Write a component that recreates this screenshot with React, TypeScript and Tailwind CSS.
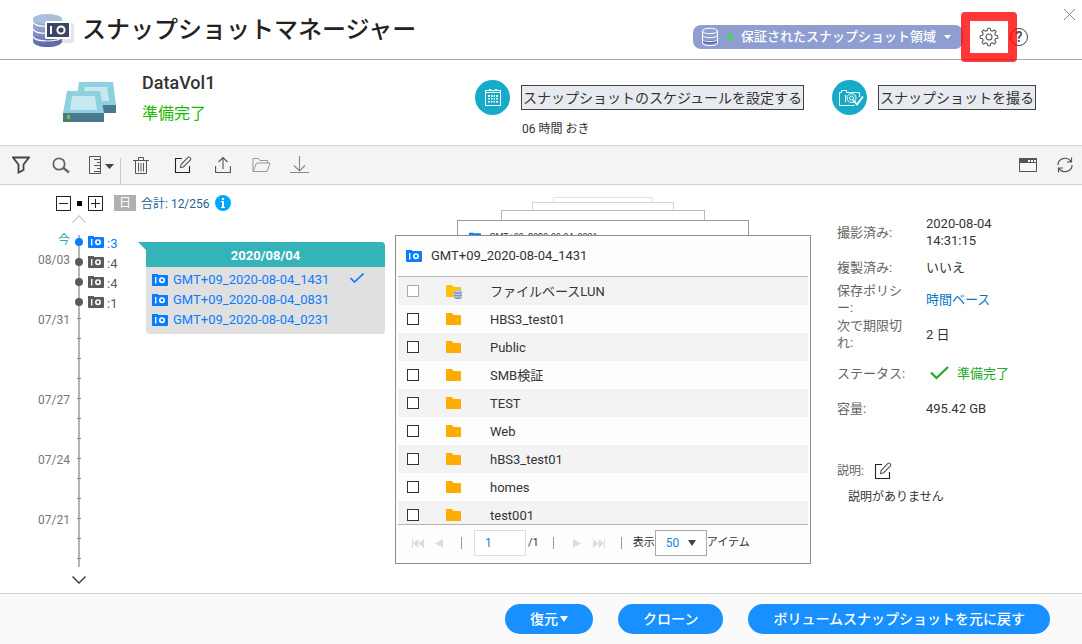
import { useState } from "react";
import type { ReactNode } from "react";

interface TimelineEntry {
  label?: string;
  count?: number;
  current?: boolean;
}

interface FolderRow {
  name: string;
  isLun?: boolean;
}

const timeline: TimelineEntry[] = [
  { label: "今", count: 3, current: true },
  { label: "08/03", count: 4 },
  { count: 4 },
  { count: 1 },
  { label: "07/31" },
  {},
  {},
  {},
  { label: "07/27" },
  {},
  {},
  { label: "07/24" },
  {},
  {},
  { label: "07/21" },
  {},
  {}
];

const snapshots = [
  "GMT+09_2020-08-04_1431",
  "GMT+09_2020-08-04_0831",
  "GMT+09_2020-08-04_0231"
];

const folders: FolderRow[] = [
  { name: "ファイルベースLUN", isLun: true },
  { name: "HBS3_test01" },
  { name: "Public" },
  { name: "SMB検証" },
  { name: "TEST" },
  { name: "Web" },
  { name: "hBS3_test01" },
  { name: "homes" },
  { name: "test001" }
];

const CameraIcon = ({ className }: { className?: string }) => (
  <svg viewBox="0 0 16 12" className={`h-3 w-4 shrink-0 ${className ?? ""}`} aria-hidden="true">
    <path d="M0 0h6v1h9a1 1 0 0 1 1 1v9a1 1 0 0 1-1 1H1a1 1 0 0 1-1-1z" fill="currentColor" />
    <rect x="3" y="3" width="1.4" height="6.5" fill="#fff" />
    <circle cx="10" cy="6.2" r="2.2" fill="none" stroke="#fff" strokeWidth="1.6" />
  </svg>
);

const EditIcon = () => (
  <svg viewBox="0 0 18 18" className="size-[18px]" fill="none" stroke="currentColor" aria-hidden="true">
    <path d="M8 2.500H1.500v14h14V10" stroke="#222" strokeWidth="1.1" />
    <path d="M6.500 11.500l.6-3L14 1.400a1.200 1.200 0 0 1 1.700 0l.7.7a1.200 1.200 0 0 1 0 1.700L9.400 11z" stroke="#555" strokeWidth="1.1" />
  </svg>
);

const FolderIcon = ({ isLun }: { isLun?: boolean }) => (
  <svg viewBox="0 0 17 14" className="h-[14px] w-[17px]" aria-hidden="true">
    <path d="M0 0h6l1.500 2H14a1 1 0 0 1 1 1v9H1a1 1 0 0 1-1-1z" fill={isLun ? "#ffc107" : "#ffab00"} />
    {isLun && (
      <g>
        <rect x="8" y="5" width="8" height="9" rx="3" fill="#7f8fc4" />
        <ellipse cx="12" cy="6.300" rx="4" ry="1.300" fill="#b9cbe4" />
        <path d="M8 8.500c1 1.400 7 1.400 8 0M8 11c1 1.400 7 1.400 8 0" stroke="#e8edf8" strokeWidth=".8" fill="none" />
      </g>
    )}
  </svg>
);

const LogoIcon = () => (
  <svg viewBox="0 0 44 36" className="h-9 w-11" aria-hidden="true">
    <defs>
      <linearGradient id="disk" x1="0" y1="0" x2="0" y2="1">
        <stop offset="0" stopColor="#a9bfdd" />
        <stop offset=".5" stopColor="#8391c8" />
        <stop offset="1" stopColor="#5a63a4" />
      </linearGradient>
    </defs>
    <path d="M1 7v22c0 8 29 8 29 0V7z" fill="url(#disk)" />
    <ellipse cx="15.500" cy="7" rx="14.500" ry="5" fill="#a9c0dd" />
    <path d="M1 10c2 6 27 6 29 0M1 17c2 6 27 6 29 0M1 24.500c2 6 27 6 29 0" fill="none" stroke="#fff" strokeWidth="1.200" />
    <rect x="14" y="11" width="28" height="20" rx="2" fill="#000" opacity=".1" />
    <rect x="13" y="9" width="26" height="18" rx="1.500" fill="#fff" />
    <rect x="15" y="11" width="22" height="14" fill="#3b4566" />
    <rect x="18" y="14" width="2" height="8" fill="#fff" />
    <circle cx="29" cy="18" r="3.600" fill="none" stroke="#fff" strokeWidth="2" />
  </svg>
);

const VolumeIcon = () => (
  <svg viewBox="0 0 53 40" className="h-10 w-[53px]" aria-hidden="true">
    <path d="M16 0h34l3 23H13z" fill="#8dd1de" />
    <path d="M13 23h40v8H13z" fill="#49788f" />
    <path d="M22 5h22l2 14H20z" fill="#c8e8ef" />
    <path d="M4 9h33l4 22H0z" fill="#8dd1de" />
    <path d="M9 14h23l2 14H7z" fill="#c8e8ef" />
    <path d="M0 31h41v9H0z" fill="#49788f" />
    <rect x="4" y="33" width="3" height="4" fill="#83c41c" />
  </svg>
);

const PoolIcon = () => (
  <svg viewBox="0 0 18 20" className="h-5 w-[18px]" fill="none" stroke="#fff" aria-hidden="true">
    <path d="M1.500 11.500c2 3 13 3 15 0v3c-2 3-13 3-15 0z" fill="#4d5fa6" stroke="none" />
    <ellipse cx="9" cy="4" rx="7.500" ry="2.700" />
    <path d="M1.500 4v12c0 3.500 15 3.500 15 0V4M1.500 8c0 3.500 15 3.500 15 0M1.500 12c0 3.500 15 3.500 15 0" />
  </svg>
);

const GearIcon = () => (
  <svg viewBox="0 0 24 24" className="size-5" fill="none" stroke="#555" strokeWidth="1.300" strokeLinejoin="round" aria-hidden="true">
    <path d="M10.500 2.500h3l.6 2.800 1.800.8 2.500-1.600 2.100 2.100-1.600 2.500.8 1.800 2.800.6v3l-2.800.6-.8 1.800 1.600 2.500-2.100 2.100-2.500-1.600-1.800.8-.6 2.800h-3l-.6-2.800-1.800-.8-2.500 1.600-2.100-2.100 1.600-2.500-.8-1.800-2.800-.6v-3l2.800-.6.8-1.800-1.600-2.500 2.100-2.100 2.500 1.600 1.800-.8z" transform="translate(0 -1)" />
    <circle cx="12" cy="12" r="3.600" />
  </svg>
);

const ToolButton = ({ label, children }: { label: string; children: ReactNode }) => (
  <button type="button" aria-label={label} className="flex h-full w-10 items-center justify-center text-[#555]">
    {children}
  </button>
);

const Header = () => (
  <header className="flex h-[60px] items-start border-b border-[#a9a9a9] pr-1.5">
    <div className="flex flex-1 items-center pt-3 pl-8">
      <LogoIcon />
      <h1 className="pl-1.5 text-2xl leading-9 font-medium text-[#222]">スナップショットマネージャー</h1>
    </div>
    <div className="flex h-full items-center pt-[15px]">
      <button type="button" className="mr-4 flex h-6 items-center rounded-lg bg-[#8e9ed0] pr-3 pl-2 text-[13px] font-medium text-white">
        <PoolIcon />
        <span className="mr-2 ml-2 size-[6px] rounded-full bg-[#4fd255]" />
        保証されたスナップショット領域
        <svg viewBox="0 0 7 4" className="ml-2 h-1 w-[7px]" aria-hidden="true">
          <path d="M0 0h7L3.500 4z" fill="#fff" />
        </svg>
      </button>
      <div className="relative mr-[11px]">
        <button type="button" aria-label="設定" className="block">
          <GearIcon />
        </button>
        <span className="pointer-events-none absolute -top-[15px] -left-[18px] h-[50px] w-14 rounded-[4px] border-[9px] border-[#ff0000c8]" />
      </div>
      <button type="button" aria-label="ヘルプ" className="mr-[35px] flex size-[18px] items-center justify-center rounded-full border border-[#444] text-sm leading-none font-bold text-[#555]">
        ?
      </button>
    </div>
    <button type="button" aria-label="閉じる" className="mt-2">
      <svg viewBox="0 0 13 13" className="size-[13px]" stroke="#888" aria-hidden="true">
        <path d="M1 1l11 11M12 1L1 12" />
      </svg>
    </button>
  </header>
);

const VolumeBar = () => (
  <section className="flex h-[86px] items-start border-b border-[#d0d0d0] pr-[46px]">
    <div className="flex flex-1 items-start pt-[11px] pl-[63px]">
      <div className="pt-[11px]">
        <VolumeIcon />
      </div>
      <div className="pl-[26px]">
        <h2 className="text-lg leading-6 font-medium text-[#333]">DataVol1</h2>
        <p className="pt-[7px] text-base leading-6 text-[#1cb800]">準備完了</p>
      </div>
    </div>
    <div className="flex gap-7 pt-5">
      <div className="flex gap-[11px]">
        <span className="flex size-[35px] items-center justify-center rounded-full bg-[#17abca] pl-px">
          <svg viewBox="0 0 16 17" className="h-[17px] w-4" aria-hidden="true">
            <path d="M0 1h16v16H0z" fill="#fff" />
            <path d="M1 4h14v12H1zM1 2h14v1H1z" fill="#17abca" />
            <path d="M4 0h2v2H4zM10 0h2v2h-2zM3 6h2v2H3zM6 6h1.500v2H6zM8.500 6H10v2H8.500zM11 6h2v2h-2zM3 9h2v1.500H3zM6 9h1.500v1.500H6zM8.500 9H10v1.500H8.500zM11 9h2v1.500h-2zM3 12h2v1.500H3zM6 12h1.500v1.500H6zM8.500 12H10v1.500H8.500zM11 12h2v1.500h-2z" fill="#fff" />
          </svg>
        </span>
        <div className="pt-[5px]">
          <button type="button" className="block h-[25px] border border-[#444] bg-[#e7eaee] px-px text-sm leading-6 text-[#333]">
            スナップショットのスケジュールを設定する
          </button>
          <p className="pt-[11px] pl-px text-xs leading-4 text-[#333]">06 時間 おき</p>
        </div>
      </div>
      <div className="flex gap-[11px]">
        <span className="flex size-[35px] items-center justify-center rounded-full bg-[#17abca] pl-0.5">
          <svg viewBox="0 0 26 18" className="h-[18px] w-[26px]" fill="none" stroke="#fff" aria-hidden="true">
            <path d="M21.500 8V3.500h-13v-2h-5v2h-2v13h15M7.500 6v7" />
            <circle cx="13.500" cy="9" r="4.500" />
            <circle cx="13.500" cy="9" r="2" />
            <path d="M15 11l4 4.500 6-8" strokeWidth="1.800" />
          </svg>
        </span>
        <div className="pt-[5px]">
          <button type="button" className="block h-[25px] border border-[#444] bg-[#e7eaee] px-px text-sm leading-6 text-[#333]">
            スナップショットを撮る
          </button>
        </div>
      </div>
    </div>
  </section>
);

const Toolbar = () => (
  <div role="toolbar" className="flex h-[39px] items-center border-b border-[#d0d0d0] bg-[#f4f4f4] pl-px">
    <ToolButton label="フィルター">
      <svg viewBox="0 0 18 18" className="size-[18px]" fill="none" stroke="#444" strokeWidth="1.800" aria-hidden="true">
        <path d="M1 1.500h16l-5.500 7V14l-5 2.500v-8z" />
      </svg>
    </ToolButton>
    <ToolButton label="検索">
      <svg viewBox="0 0 18 18" className="size-[18px]" fill="none" stroke="#666" strokeWidth="1.800" aria-hidden="true">
        <circle cx="7" cy="8" r="5.700" />
        <path d="M11.500 12l5.500 4.500" strokeWidth="2.300" />
      </svg>
    </ToolButton>
    <ToolButton label="目盛り">
      <svg viewBox="0 0 25 20" className="h-5 w-[25px]" fill="none" stroke="#555" aria-hidden="true">
        <path d="M.5 1.500h11v17H.5zM5 4.500h6M8 7.500h3M5 10.500h6M8 13.500h3M5 16.500h6" />
        <path d="M16 9h9l-4.500 5z" fill="#444" stroke="none" />
      </svg>
    </ToolButton>
    <span className="-ml-px h-[26px] w-px self-end bg-[#c8c8c8]" />
    <ToolButton label="削除">
      <svg viewBox="0 0 18 19" className="h-[19px] w-[18px]" fill="none" stroke="#555" aria-hidden="true">
        <path d="M1 4.500h16M6.500 4V1.500h5V4M3.500 5v12.500h11V5M6.500 7v8.500M9 7v8.500M11.500 7v8.500" />
      </svg>
    </ToolButton>
    <span className="flex h-full pl-0.5">
      <ToolButton label="編集">
        <EditIcon />
      </ToolButton>
    </span>
    <ToolButton label="アップロード">
      <svg viewBox="0 0 16 18" className="h-[18px] w-4" fill="none" stroke="#555" strokeWidth="1.100" aria-hidden="true">
        <path d="M.6 10v6.500h14.800V10M8 13V1.500M3.500 6L8 1.500 12.500 6" />
      </svg>
    </ToolButton>
    <button type="button" aria-label="フォルダーを開く" className="flex h-full w-9 items-center justify-center">
      <svg viewBox="0 0 19 16" className="h-4 w-[19px]" fill="none" stroke="#999" aria-hidden="true">
        <path d="M1 14.500V1.500h5.500l1.500 2h7.500V6M1 14.500L4.500 6H18l-3 8.500z" />
      </svg>
    </button>
    <ToolButton label="ダウンロード">
      <svg viewBox="0 0 19 18" className="h-[18px] w-[19px]" fill="none" stroke="#888" strokeWidth="1.100" aria-hidden="true">
        <path d="M9.500 0v15M4 9.500l5.500 5.500L15 9.500M0 16.500h19" />
      </svg>
    </ToolButton>
    <div className="ml-auto flex h-full">
      <ToolButton label="ウィンドウ">
        <svg viewBox="0 0 18 14" className="h-[14px] w-[18px]" aria-hidden="true">
          <path d="M.5.5h17v13H.5z" fill="#f7f7f7" stroke="#555" />
          <path d="M0 0h18v5H0z" fill="#555" />
          <path d="M9 2h2v2H9zM12 2h2v2h-2zM15 2h2v2h-2z" fill="#fff" />
        </svg>
      </ToolButton>
      <button type="button" aria-label="更新" className="flex w-[34px] items-center justify-center">
        <svg viewBox="0 0 16 16" className="size-4" fill="none" stroke="#555" strokeWidth="1.200" aria-hidden="true">
          <path d="M1 8a7 6.500 0 0 1 13-3.500M14.500.5v4.500h-4.500M15 8a7 6.500 0 0 1-13 3.500M1.500 15.500V11H6" />
        </svg>
      </button>
    </div>
  </div>
);

const TimelineRow = ({ entry }: { entry: TimelineEntry }) => (
  <li className="flex h-5 items-start">
    <span className={`w-[33px] text-right text-xs leading-4 ${entry.current ? "text-[#2aabb0]" : "text-[#777]"}`}>
      {entry.label}
    </span>
    <span className="flex w-[18px] justify-center pt-1.5">
      {entry.count ? (
        <span className={`size-2 rounded-full ${entry.current ? "bg-[#0a7cff]" : "bg-[#5a5a5a]"}`} />
      ) : (
        <span className="h-px w-1 bg-[#888]" />
      )}
    </span>
    {entry.count && (
      <button type="button" className={`flex h-5 items-center gap-[3px] text-[13px] leading-5 ${entry.current ? "text-[#0a7cff]" : "text-[#5a5a5a]"}`}>
        <CameraIcon />
        <span className="pt-[3px]">:{entry.count}</span>
      </button>
    )}
  </li>
);

const Timeline = () => (
  <div className="flex w-[395px] shrink-0 flex-col pl-[37px]">
    <div className="flex h-9 items-center pl-[19px]">
      <button type="button" aria-label="縮小" className="flex size-[15px] items-center justify-center border border-[#222]">
        <span className="h-px w-[9px] bg-[#222]" />
      </button>
      <span className="mx-[6px] size-[5px] bg-black" />
      <button type="button" aria-label="拡大" className="flex size-[15px] items-center justify-center border border-[#222]">
        <svg viewBox="0 0 9 9" className="size-[9px]" stroke="#222" aria-hidden="true">
          <path d="M0 4.500h9M4.500 0v9" />
        </svg>
      </button>
      <span className="mr-[5px] ml-[11px] flex h-4 w-[22px] items-center justify-center bg-[#b0b0b0] text-xs text-white">日</span>
      <span className="pt-px text-xs text-[#256496]">合計: 12/256</span>
      <span className="ml-[5px] flex size-4 items-center justify-center rounded-full bg-[#00a8ff]">
        <svg viewBox="0 0 4 10" className="h-2.5 w-1" fill="#fff" aria-hidden="true">
          <path d="M1 0h2v2H1zM0 3h3v6h1v1H0V9h1V4H0z" />
        </svg>
      </span>
    </div>
    <button type="button" aria-label="上へ" className="flex h-[11px] w-[84px] justify-center">
      <svg viewBox="0 0 14 8" className="-mt-[6px] h-2 w-[14px]" fill="none" stroke="#ccc" strokeWidth="1.300" aria-hidden="true">
        <path d="M.5 7.500L7 1l6.500 6.500" />
      </svg>
    </button>
    <div className="flex items-start">
      <ol className="relative w-[101px]">
        <span className="absolute top-[3px] bottom-[5px] left-[41px] w-0.5 bg-[#b5b5b5]" />
        <div className="relative">
          {timeline.map((entry, index) => (
            <TimelineRow key={index} entry={entry} />
          ))}
        </div>
      </ol>
      <div className="mr-2.5 flex flex-1 pt-2.5">
        <svg viewBox="0 0 8 8" className="size-2 shrink-0" aria-hidden="true">
          <path d="M0 0h8v8z" fill="#34b3b9" />
        </svg>
        <section className="flex-1 overflow-hidden rounded-tr rounded-b bg-[#e0e0e0]">
          <h3 className="bg-[#34b3b9] pt-0.5 text-center text-[13px] leading-[23px] font-bold text-white">2020/08/04</h3>
          <ul className="pt-[3px] pb-1">
            {snapshots.map((name, index) => (
              <li key={name}>
                <button type="button" className="flex h-5 w-full items-center gap-[5px] px-1.5 text-[13px] text-[#0a7cff]">
                  <CameraIcon />
                  {name}
                  {index === 0 && (
                    <svg viewBox="0 0 14 10" className="mr-[15px] mb-1 ml-auto h-2.5 w-[14px]" fill="none" stroke="#0a7cff" strokeWidth="1.600" aria-hidden="true">
                      <path d="M.5 5l4 4L13.500.5" />
                    </svg>
                  )}
                </button>
              </li>
            ))}
          </ul>
        </section>
      </div>
    </div>
    <button type="button" aria-label="下へ" className="flex h-5 w-[84px] justify-center pt-1">
      <svg viewBox="0 0 14 8" className="h-2 w-[14px]" fill="none" stroke="#333" strokeWidth="1.300" aria-hidden="true">
        <path d="M.5.5L7 7l6.500-6.500" />
      </svg>
    </button>
  </div>
);

const Pager = () => {
  const [page, setPage] = useState("1");

  return (
    <div className="flex h-[38px] items-center pb-0.5 text-xs text-[#333]">
      <button type="button" aria-label="最初のページ" className="ml-3.5">
        <svg viewBox="0 0 12 9" className="h-[9px] w-3" fill="#dcdcdc" aria-hidden="true">
          <path d="M0 0h1v9H0zM6.500 0v9L1 4.500zM12 0v9L6.500 4.500z" />
        </svg>
      </button>
      <button type="button" aria-label="前のページ" className="ml-[11px]">
        <svg viewBox="0 0 8 9" className="h-[9px] w-2" fill="#dcdcdc" aria-hidden="true">
          <path d="M8 0v9L0 4.500z" />
        </svg>
      </button>
      <span className="ml-[18px] h-3 w-px bg-[#a09a85]" />
      <input
        aria-label="ページ"
        value={page}
        onChange={(event) => setPage(event.target.value)}
        className="ml-3 h-[26px] w-[52px] border border-[#ddd] bg-white pl-2.5 text-xs text-[#1683d3]"
      />
      <span className="ml-0.5 text-[11px]">/1</span>
      <span className="ml-[14px] h-3 w-px bg-[#a09a85]" />
      <button type="button" aria-label="次のページ" className="ml-[19px]">
        <svg viewBox="0 0 8 9" className="h-[9px] w-2" fill="#dcdcdc" aria-hidden="true">
          <path d="M0 0v9l8-4.500z" />
        </svg>
      </button>
      <button type="button" aria-label="最後のページ" className="ml-3">
        <svg viewBox="0 0 12 9" className="h-[9px] w-3" fill="#dcdcdc" aria-hidden="true">
          <path d="M11 0h1v9h-1zM0 0v9l5.500-4.500zM5.500 0v9L11 4.500z" />
        </svg>
      </button>
      <span className="ml-4 h-3 w-px bg-[#a09a85]" />
      <label htmlFor="page-size" className="ml-[11px] text-[11px]">表示</label>
      <div className="relative">
        <select id="page-size" defaultValue="50" className="block h-[26px] w-[52px] appearance-none border border-[#aaa] bg-white pl-2.5 text-xs text-[#1683d3]">
          <option>50</option>
          <option>100</option>
        </select>
        <svg viewBox="0 0 8 6" className="pointer-events-none absolute top-2.5 right-[11px] h-1.5 w-2" aria-hidden="true">
          <path d="M0 0h8L4 6z" fill="#444" />
        </svg>
      </div>
      <span className="text-[11px]">アイテム</span>
    </div>
  );
};

const Browser = () => (
  <div className="flex min-w-0 flex-1 flex-col items-center pt-3">
    <div className="h-[5px] w-[24%] border-x border-t border-[#e2e2e2]" />
    <div className="h-2 w-[34%] border-x border-t border-[#d4d4d4]" />
    <div className="h-2.5 w-[49%] border-x border-t border-[#b9b9b9]" />
    <div className="h-[15px] w-[70%] overflow-hidden border-x border-t border-[#999]">
      <div className="flex items-center gap-1.5 pt-2.5 pl-[9px] text-[9px] leading-3 text-[#333]">
        <CameraIcon className="scale-75 text-[#0a7cff]" />
        GMT+09_2020-08-04_0831
      </div>
    </div>
    <section className="w-full border border-[#8c8c8c] bg-[#fdfdfd] px-0.5">
      <h3 className="flex h-[41px] items-center gap-[9px] border-b border-[#b5b5b5] pl-2 text-[13px] text-[#333]">
        <CameraIcon className="text-[#0a7cff]" />
        GMT+09_2020-08-04_1431
      </h3>
      <div className="h-[248px] overflow-hidden border-b border-[#b5b5b5]">
        <table className="w-full text-left text-[13px] text-[#333]">
          <tbody>
            {folders.map((folder) => (
              <tr key={folder.name} className="h-7 odd:bg-[#f3f3f3]">
                <td className="w-12 pl-[9px]">
                  <input
                    type="checkbox"
                    aria-label={folder.name}
                    disabled={folder.isLun}
                    className="block size-3 appearance-none border border-[#333] bg-white checked:bg-[#0a7cff] disabled:border-[#aaa]"
                  />
                </td>
                <td className="w-11 pt-0.5">
                  <FolderIcon isLun={folder.isLun} />
                </td>
                <td className="pt-0.5">{folder.name}</td>
              </tr>
            ))}
          </tbody>
        </table>
      </div>
      <Pager />
    </section>
  </div>
);

const DetailRow = ({ label, height, children }: { label: string; height: string; children: ReactNode }) => (
  <div className={`flex items-center ${height}`}>
    <dt className="w-[70px] text-[#666]">{label}</dt>
    <dd className="ml-[19px] w-[90px] text-[#333]">{children}</dd>
  </div>
);

const Details = () => (
  <aside className="w-[271px] shrink-0 pt-[27px] pl-[26px] text-[13px] leading-[17px]">
    <dl>
      <DetailRow label="撮影済み:" height="min-h-10">2020-08-04 14:31:15</DetailRow>
      <DetailRow label="複製済み:" height="min-h-[30px]">いいえ</DetailRow>
      <DetailRow label="保存ポリシー:" height="min-h-[34px]">
        <a href="#policy" className="text-[#0b75c4]">時間ベース</a>
      </DetailRow>
      <DetailRow label="次で期限切れ:" height="min-h-9">2 日</DetailRow>
      <DetailRow label="ステータス:" height="min-h-[42px]">
        <span className="flex items-center gap-2 pl-1 whitespace-nowrap text-[#23a92a]">
          <svg viewBox="0 0 19 14" className="h-[14px] w-[19px] shrink-0" fill="none" stroke="#23a92a" strokeWidth="2.200" aria-hidden="true">
            <path d="M1 6.500l5.500 5.500L18 1" />
          </svg>
          準備完了
        </span>
      </DetailRow>
      <DetailRow label="容量:" height="min-h-7">495.42 GB</DetailRow>
    </dl>
    <div className="flex items-center gap-2.5 pt-10 text-xs text-[#666]">
      説明:
      <button type="button" aria-label="説明を編集">
        <EditIcon />
      </button>
    </div>
    <p className="pt-[9px] pl-[11px] text-xs leading-4 text-[#333]">説明がありません</p>
  </aside>
);

const Footer = () => (
  <footer className="flex h-[51px] items-center justify-end gap-[25px] border-t border-[#d0d0d0] bg-[#fafafa] pr-8 text-sm font-medium text-white">
    <button type="button" className="flex h-[30px] items-center rounded-full bg-[#1890ff] px-[25px]">
      復元
      <svg viewBox="0 0 8 6" className="ml-0.5 h-1.5 w-2" aria-hidden="true">
        <path d="M0 0h8L4 6z" fill="#fff" />
      </svg>
    </button>
    <button type="button" className="h-[30px] rounded-full bg-[#1890ff] px-[25px]">クローン</button>
    <button type="button" className="h-[30px] rounded-full bg-[#1890ff] px-[25px]">ボリュームスナップショットを元に戻す</button>
  </footer>
);

export default function App() {
  return (
    <div className="flex min-h-screen flex-col bg-white font-['Roboto','Noto_Sans_CJK_JP',sans-serif]">
      <Header />
      <VolumeBar />
      <Toolbar />
      <main className="flex flex-1">
        <Timeline />
        <Browser />
        <Details />
      </main>
      <Footer />
    </div>
  );
}
